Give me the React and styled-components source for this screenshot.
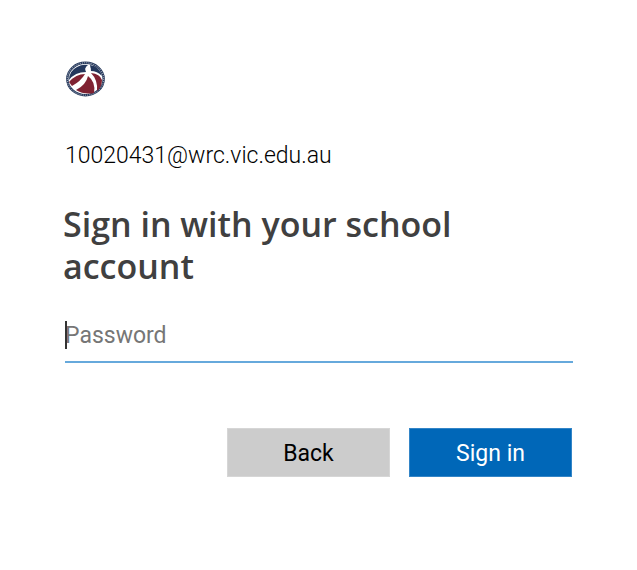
import React from 'react';
import styled, { createGlobalStyle } from 'styled-components';

const GlobalStyle = createGlobalStyle`
  * {
    box-sizing: border-box;
  }
  body {
    margin: 0;
    background: #fff;
    color: #1b1b1b;
    font-family: Roboto, 'Liberation Sans', sans-serif;
    font-size: 23px;
    line-height: 28px;
  }
`;

const Page = styled.main`
  padding: 60px 64px 60px 63px;
`;

const Logo = styled.svg`
  display: block;
  width: 42px;
  height: 38px;
  margin-left: 1px;
`;

const Identity = styled.div`
  margin-top: 44px;
  padding-left: 2px;
  font-weight: 300;
  color: #000;
`;

const Title = styled.h1`
  margin: 33px 0 0;
  color: #404040;
  font-family: 'Open Sans', 'Noto Sans', sans-serif;
  font-size: 34px;
  font-weight: 600;
  line-height: 42px;
`;

const Field = styled.div`
  position: relative;
  margin-top: 29px;
  padding-left: 2px;
`;

const PasswordInput = styled.input`
  display: block;
  width: 100%;
  height: 47px;
  padding: 0 0 6px;
  border: 0;
  border-bottom: 2px solid #66a9dc;
  outline: none;
  background: transparent;
  font: inherit;

  &::placeholder {
    color: #767676;
    opacity: 1;
  }
`;

const Caret = styled.span`
  position: absolute;
  top: 5px;
  left: 2px;
  width: 2px;
  height: 28px;
  background: #333;
`;

const Actions = styled.div`
  display: flex;
  justify-content: flex-end;
  gap: 19px;
  margin-top: 65px;
  padding-right: 1px;
`;

const Button = styled.button`
  width: 163px;
  height: 49px;
  padding: 2px 0 0;
  border: 1px solid ${(props) => (props.$primary ? '#3385c7' : '#d6d6d6')};
  background: ${(props) => (props.$primary ? '#0067b8' : '#ccc')};
  color: ${(props) => (props.$primary ? '#fff' : '#000')};
  font: inherit;
`;

function SchoolLogo() {
  return (
    <Logo viewBox="0 0 42 38" role="img" aria-label="School logo">
      <ellipse cx="21.5" cy="19" rx="18.2" ry="16.2" fill="#fff" stroke="#26395c" strokeWidth="2.4" />
      <ellipse
        cx="21.5"
        cy="19"
        rx="18.2"
        ry="16.2"
        fill="none"
        stroke="#fff"
        strokeWidth="1"
        strokeDasharray="1 1.2"
        opacity="0.7"
      />
      {/* sky */}
      <path d="M5 20Q5 11 13 7Q18 4 24 5Q20 8 22 12Q11 12 5 20Z" fill="#23375c" />
      <path d="M26 5Q35 6 38 16Q33 11 27 11Z" fill="#23375c" />
      {/* ground */}
      <path d="M5 22Q12 14 21 14Q17 21 8 26Z" fill="#7f2232" />
      <path d="M24 16Q32 22 30 33Q20 35 12 30Q22 25 24 16Z" fill="#7f2232" />
      <path d="M27 13Q36 14 38 20Q38 27 33 31Q34 20 27 13Z" fill="#7f2232" />
      <circle cx="24" cy="9" r="2.5" fill="#fff" />
    </Logo>
  );
}

function App() {
  return (
    <>
      <GlobalStyle />
      <Page>
        <SchoolLogo />
        <Identity>10020431@wrc.vic.edu.au</Identity>
        <form onSubmit={(e) => e.preventDefault()}>
          <Title>Sign in with your school account</Title>
          <Field>
            <PasswordInput type="password" placeholder="Password" aria-label="Password" />
            <Caret />
          </Field>
          <Actions>
            <Button type="button">Back</Button>
            <Button type="submit" $primary>
              Sign in
            </Button>
          </Actions>
        </form>
      </Page>
    </>
  );
}

export default App;
